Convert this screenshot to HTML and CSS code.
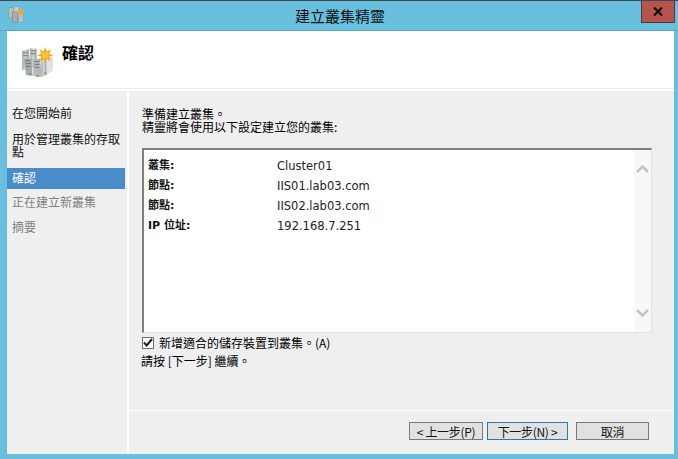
FILE: index.html
```html
<!DOCTYPE html>
<html lang="zh-Hant">
<head>
<meta charset="utf-8">
<title>建立叢集精靈</title>
<link rel="stylesheet" href="styles.css">
</head>
<body>
<div class="window">
  <header class="titlebar">
    <svg class="app-icon" width="17" height="17" viewBox="0 0 20 20">
      <rect x="1" y="2" width="6" height="12" fill="#b9bdbd" stroke="#8a8f8f" stroke-width=".6"/>
      <rect x="7" y="1" width="6" height="12" fill="#c9cccc" stroke="#8a8f8f" stroke-width=".6"/>
      <rect x="5" y="7" width="6" height="12" fill="#a9aeae" stroke="#777" stroke-width=".6"/>
      <rect x="12" y="9" width="6" height="10" fill="#c0c4c4" stroke="#8a8f8f" stroke-width=".6" opacity=".8"/>
      <path d="M15 2l1 3 3-1-2 3 2 2-3 0-1 3-1-3-3 0 2-2-2-3 3 1z" fill="#f5a81e"/>
    </svg>
    <div class="title">建立叢集精靈</div>
    <button class="close">
      <svg width="10" height="9" viewBox="0 0 10 9"><path d="M1 .5L9 8.5M9 .5L1 8.5" stroke="#111" stroke-width="2.2" fill="none"/></svg>
    </button>
  </header>
  <div class="client">
    <div class="banner">
      <svg class="banner-icon" width="33" height="31" viewBox="0 0 34 32">
        <defs>
          <linearGradient id="srv" x1="0" x2="1" y1="0" y2="0"><stop offset="0" stop-color="#aeb2b2"/><stop offset=".6" stop-color="#d6d8d8"/><stop offset="1" stop-color="#8f9494"/></linearGradient>
        </defs>
        <path d="M22 8l11 4v13l-9 6h-4z" fill="#c8cccc"/>
        <path d="M26 10l7 2v13l-7 5z" fill="#e2e4e4"/>
        <path d="M1 5l7-2v20l-7 2z" fill="url(#srv)"/>
        <path d="M9 2l7 1v20l-7-1z" fill="url(#srv)"/>
        <path d="M3 13l8 0 1 18-7-1z" fill="#a6aaaa"/>
        <path d="M12 14l8-1 1 19-8-1z" fill="#b4b8b8"/>
        <path d="M21 11l5-1v20l-5 2z" fill="url(#srv)"/>
        <path d="M4.500 15h5M5 18h5M5 21h5M14 16h5M14 19h5M14 22h5M2 7h5M2 10h5M10 5h5M10 8h5" stroke="#707575" stroke-width="1"/>
        <rect x="8" y="28" width="2" height="2" fill="#5fae3c"/>
        <rect x="16" y="30" width="2" height="2" fill="#5fae3c"/>
        <rect x="24" y="27" width="2" height="2" fill="#5fae3c"/>
        <path d="M25 1l1.600 4.600 4.400-2.100-2.100 4.500 4.600 1.500-4.600 1.600 2.100 4.400-4.400-2.100-1.600 4.600-1.600-4.600-4.400 2.100 2.100-4.400-4.600-1.600 4.600-1.500-2.100-4.500 4.400 2.100z" fill="#f3a41c"/>
        <circle cx="25" cy="9.500" r="3.500" fill="#fbc530"/>
      </svg>
      <h1 class="heading">確認</h1>
    </div>
    <div class="main">
      <nav class="nav">
        <div class="step">在您開始前</div>
        <div class="step step-wrap">用於管理叢集的存取點</div>
        <div class="step active">確認</div>
        <div class="step muted">正在建立新叢集</div>
        <div class="step muted">摘要</div>
      </nav>
      <section class="content">
        <div class="body">
          <p class="intro">準備建立叢集。<br>精靈將會使用以下設定建立您的叢集:</p>
          <div class="listbox">
            <div class="rows">
              <div class="row"><span class="key">叢集:</span><span class="val">Cluster01</span></div>
              <div class="row"><span class="key">節點:</span><span class="val">IIS01.lab03.com</span></div>
              <div class="row"><span class="key">節點:</span><span class="val">IIS02.lab03.com</span></div>
              <div class="row"><span class="key">IP 位址:</span><span class="val">192.168.7.251</span></div>
            </div>
            <div class="scrollbar">
              <svg width="13" height="8" viewBox="0 0 13 8"><path d="M1 7L6.500 1.500L12 7" stroke="#c4c4c4" stroke-width="2.500" fill="none"/></svg>
              <svg width="13" height="8" viewBox="0 0 13 8"><path d="M1 1L6.500 6.500L12 1" stroke="#c4c4c4" stroke-width="2.500" fill="none"/></svg>
            </div>
          </div>
          <label class="check">
            <span class="box"><svg width="10" height="9" viewBox="0 0 10 9"><path d="M1 4.500L3.700 7.500L9 1" stroke="#222" stroke-width="2" fill="none"/></svg></span>
            <span>新增適合的儲存裝置到叢集。(A)</span>
          </label>
          <p class="hint">請按 [下一步] 繼續。</p>
        </div>
        <footer class="footer">
          <button class="btn btn-back">&lt; 上一步(P)</button>
          <button class="btn btn-next">下一步(N) &gt;</button>
          <button class="btn btn-cancel">取消</button>
        </footer>
      </section>
    </div>
  </div>
</div>
</body>
</html>
```
FILE: styles.css
```css
* { box-sizing: border-box; }
html, body { margin: 0; padding: 0; }
body {
  width: 678px;
  height: 459px;
  overflow: hidden;
  font-family: "Noto Sans CJK TC", "Liberation Sans", sans-serif;
  font-size: 12px;
  color: #000;
}
.window {
  width: 678px;
  height: 459px;
  display: flex;
  flex-direction: column;
  background: #68c0de;
  border-top: 1px solid #3f4a50;
  padding: 0 4px 5px 7px;
}
.titlebar {
  height: 30px;
  flex: none;
  display: flex;
  align-items: flex-start;
  position: relative;
  justify-content: center;
  border-bottom: 1px solid #5fa4bc;
  margin-left: -7px;
  margin-right: -4px;
}
.app-icon { position: absolute; left: 8px; top: 5px; }
.title {
  font-size: 15px;
  line-height: 30px;
  color: #111;
  margin-left: 2px;
}
.close {
  position: absolute;
  right: 3px;
  top: 0;
  width: 34px;
  height: 22px;
  background: #b8544b;
  border: 1px solid #4a3b3b;
  border-top: 0;
  padding: 0;
  display: flex;
  align-items: center;
  justify-content: center;
}
.client {
  flex: 1;
  min-height: 0;
  display: flex;
  flex-direction: column;
  background: #fff;
}
.banner {
  height: 58px;
  flex: none;
  display: flex;
  align-items: flex-start;
  padding: 15px 0 0 14px;
  border-bottom: 1px solid #ececec;
}
.banner-icon { flex: none; }
.heading {
  margin: -6px 0 0 8px;
  font-size: 16px;
  line-height: 24px;
  font-weight: 700;
  color: #000;
}
.main {
  flex: 1;
  min-height: 0;
  display: flex;
  gap: 2px;
  padding-top: 2px;
}
.nav {
  width: 120px;
  flex: none;
  background: #efefef;
  padding: 15px 2px 0 0;
}
.step {
  padding: 0 5px;
  line-height: 13px;
  height: 13px;
  margin-bottom: 13px;
  font-size: 12px;
  color: #111;
}
.step-wrap { height: 26px; margin-bottom: 10px; }
.active {
  height: 21px;
  line-height: 20px;
  margin-bottom: 6px;
  background: #4a8bc9;
  color: #fff;
}
.muted { color: #7f7f7f; margin-bottom: 12px; }
.content {
  flex: 1;
  min-width: 0;
  display: flex;
  flex-direction: column;
  background: #efefef;
}
.body {
  flex: 1;
  min-height: 0;
  padding: 16px 22px 0 13px;
}
.intro {
  margin: 0;
  line-height: 13px;
  height: 26px;
}
.listbox {
  margin-top: 15px;
  height: 185px;
  display: flex;
  background: #fff;
  border-style: solid;
  border-width: 2px 1px 1px 2px;
  border-color: #7f7f7f #e2e2e2 #e2e2e2 #7f7f7f;
}
.rows {
  flex: 1;
  padding: 6px 0 0 4px;
}
.row {
  display: flex;
  height: 20px;
  align-items: center;
}
.key {
  width: 129px;
  flex: none;
  font-size: 11px;
  font-weight: 700;
  font-family: "DejaVu Sans", "Noto Sans CJK TC", sans-serif;
  color: #111;
  margin-top: -4px;
}
.val {
  font-family: "DejaVu Sans", sans-serif;
  font-size: 11.5px;
  color: #222;
}
.scrollbar {
  width: 17px;
  flex: none;
  background: #f8f8f8;
  display: flex;
  flex-direction: column;
  justify-content: space-between;
  align-items: center;
  padding: 15px 0 15px;
}
.check {
  display: flex;
  align-items: center;
  gap: 5px;
  height: 13px;
  margin-top: 3px;
  line-height: 13px;
}
.box {
  width: 12px;
  height: 12px;
  flex: none;
  background: #fff;
  border: 1px solid #6f6f6f;
  display: flex;
  align-items: center;
  justify-content: center;
}
.hint {
  margin: 5px 0 0 -1px;
  line-height: 13px;
}
.footer {
  height: 44px;
  flex: none;
  border-top: 1px solid #fff;
  display: flex;
  align-items: flex-start;
  padding: 11px 0 0 280px;
}
.btn {
  height: 18px;
  padding: 0;
  background: #e1e1e1;
  border: 1px solid #7a7a7a;
  font-family: "Noto Sans CJK TC", sans-serif;
  font-size: 12px;
  line-height: 15px;
  letter-spacing: -.3px;
  color: #111;
}
.btn-back { width: 74px; }
.btn-next { width: 81px; margin-left: 4px; border-color: #2f76ae; }
.btn-cancel { width: 73px; margin-left: 8px; }
```
